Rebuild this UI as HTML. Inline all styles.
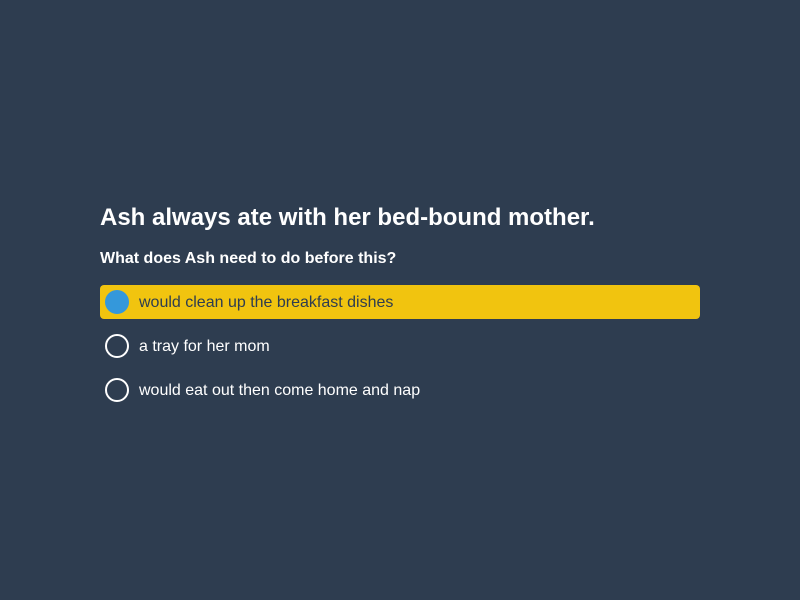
<!DOCTYPE html>
<html><head><style>
body{margin:0;width:800px;height:600px;background:#2e3d50;font-family:"Liberation Sans",sans-serif;color:#fff;position:relative;overflow:hidden}
h1{position:absolute;left:100px;top:204px;margin:0;font-size:24px;font-weight:bold}
h2{position:absolute;left:100px;top:250px;margin:0;font-size:16px;font-weight:bold}
.opt{position:absolute;left:100px;width:600px;height:34px;border-radius:4px;font-size:16px;line-height:34px}
.opt .c{position:absolute;left:5px;top:5px;width:20px;height:20px;border:2px solid #fff;border-radius:50%}
.opt span{position:absolute;left:39px;top:1px}
.sel{background:#f1c40f;color:#2e3d50}
.sel .c{background:#3498db;border-color:#3498db}
</style></head><body>
<h1>Ash always ate with her bed-bound mother.</h1>
<h2>What does Ash need to do before this?</h2>
<div class="opt sel" style="top:285px"><div class="c"></div><span>would clean up the breakfast dishes</span></div>
<div class="opt" style="top:329px"><div class="c"></div><span>a tray for her mom</span></div>
<div class="opt" style="top:373px"><div class="c"></div><span>would eat out then come home and nap</span></div>
</body></html>
